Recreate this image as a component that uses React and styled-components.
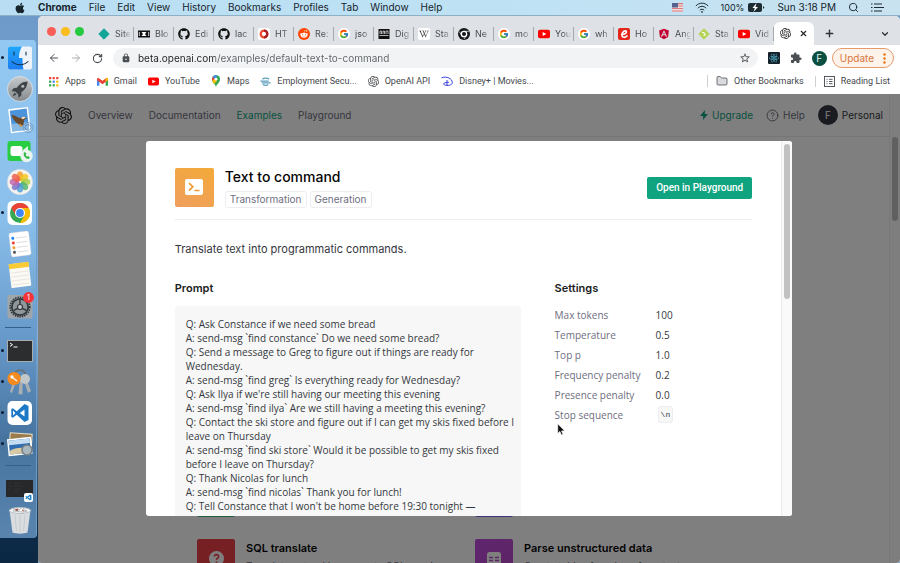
import React from "react";
import styled, { createGlobalStyle, css } from "styled-components";
import { FaApple, FaGithub, FaRedditAlien, FaAngular, FaWikipediaW, FaReact } from "react-icons/fa";
import { FcGoogle } from "react-icons/fc";
import { SiOpenai } from "react-icons/si";
import { BiLogoVisualStudio } from "react-icons/bi";
import { MdExtension, MdLock, MdStarBorder } from "react-icons/md";
import { ArrowLeft, ArrowRight, RotateCw, Plus, X, ChevronDown, Search, Folder, CircleQuestionMark } from "lucide-react";

const GlobalStyle = createGlobalStyle`
  * { box-sizing: border-box; }
  body { margin: 0; font-family: Inter, "Liberation Sans", sans-serif; overflow: hidden; }
  button, input { font: inherit; }
  button { border: 0; padding: 0; background: none; color: inherit; display: flex; align-items: center; }
  a { color: inherit; text-decoration: none; }
  h1, h2, h3, p, dl, dd, pre { margin: 0; }
  svg { display: block; flex: none; }
`;

const Desktop = styled.div`
  height: 100vh;
  display: flex;
  flex-direction: column;
  background: #6f9cc9;
`;

/* ---------- menu bar ---------- */
const MenuBar = styled.header`
  flex: none;
  height: 16px;
  display: flex;
  align-items: center;
  justify-content: space-between;
  padding: 0 16px 0 14px;
  background: linear-gradient(90deg, #b9def3, #bfe2f4 60%, #c9e2f0);
  border-bottom: 1px solid #8fb0c4;
  color: #17242c;
  font-size: 10px;
  line-height: 15px;
`;
const MenuGroup = styled.nav`
  display: flex;
  align-items: center;
  gap: ${(p) => p.$gap}px;
`;
const MenuItem = styled.button`
  font-weight: ${(p) => (p.$bold ? 700 : 400)};
  white-space: nowrap;
`;
const Charge = styled.span`
  display: flex;
  align-items: center;
  gap: 4px;
  font-size: 9px;
`;

/* ---------- dock ---------- */
const Workspace = styled.div`
  flex: 1;
  min-height: 0;
  display: flex;
`;
const DockColumn = styled.aside`
  flex: none;
  width: 38px;
  padding: 24px 1px 0 0;
  background: linear-gradient(#6d9ac9, #7fb0de 60%, #0d2c49 94%, #0b2742);
`;
const Dock = styled.div`
  padding: 2px 0 3px;
  border-radius: 0 4px 4px 0;
  border-right: 1px solid #6e9cc4;
  background: linear-gradient(#93c8f2, #8cc0ec 35%, #6395c6 62%, #47749f 80%, #5884ae);
`;
const DockItem = styled.button`
  display: grid;
  grid-template-columns: 6px 28px;
  align-items: center;
  height: 31px;
  &::before {
    content: "";
    width: 3px;
    height: 3px;
    margin-left: 1px;
    border-radius: 50%;
    background: ${(p) => (p.$running ? "#0d1b33" : "transparent")};
  }
`;
const DockRule = styled.div`
  height: 1px;
  margin: 6px 5px 7px;
  background: #35608a;
`;

/* ---------- browser ---------- */
const Browser = styled.section`
  flex: 1;
  min-width: 0;
  display: flex;
  flex-direction: column;
  background: #fff;
  border-radius: 5px 5px 4px 4px;
  overflow: hidden;
`;
const TabStrip = styled.div`
  flex: none;
  height: 29px;
  padding-top: 6px;
  display: flex;
  align-items: center;
  background: #dee1e6;
  color: #4a4e53;
`;
const Lights = styled.div`
  flex: none;
  width: 56px;
  padding: 0 0 4px 9px;
  display: flex;
  gap: 5px;
`;
const Light = styled.button`
  width: 9px;
  height: 9px;
  border-radius: 50%;
  background: ${(p) => p.$color};
`;
const Tab = styled.button`
  flex: none;
  width: 40px;
  height: 14px;
  padding: 0 0 0 4px;
  gap: 5px;
  overflow: hidden;
  font-size: 9px;
  border-right: 1px solid #a5a9ae;
  span {
    flex: 1;
    text-align: left;
    overflow: hidden;
    white-space: nowrap;
    mask-image: linear-gradient(90deg, #000 45%, transparent 90%);
  }
`;
const ActiveTab = styled.div`
  flex: none;
  width: 40px;
  height: 23px;
  align-self: flex-end;
  display: flex;
  align-items: center;
  justify-content: center;
  gap: 8px;
  background: #fff;
  border-radius: 6px 6px 0 0;
  color: #202124;
`;
const StripButton = styled.button`
  flex: none;
  padding: 0 10px;
  color: #2f3337;
  margin-left: ${(p) => (p.$end ? "auto" : 0)};
`;
const Toolbar = styled.div`
  flex: none;
  height: 24px;
  margin-top: 1px;
  display: flex;
  align-items: center;
  gap: 10px;
  padding: 0 6px 0 10px;
  color: #4b4f54;
`;
const Address = styled.label`
  flex: 1;
  height: 20px;
  display: flex;
  align-items: center;
  gap: 7px;
  padding: 0 7px 0 8px;
  background: #f1f3f4;
  border-radius: 10px;
  input {
    flex: 1;
    border: 0;
    outline: 0;
    padding: 0;
    font-size: 10px;
    line-height: 16px;
    color: transparent;
    background: linear-gradient(90deg, #202124 77px, #5f6368 77px);
    background-clip: text;
  }
`;
const Avatar = styled.span`
  flex: none;
  width: ${(p) => p.$size}px;
  height: ${(p) => p.$size}px;
  display: grid;
  place-items: center;
  border-radius: 50%;
  background: ${(p) => p.$bg};
  color: ${(p) => p.$fg};
  font-size: 10px;
`;
const UpdateButton = styled.button`
  height: 20px;
  padding: 0 7px;
  gap: 9px;
  margin-left: -5px;
  border: 1px solid #e59a6b;
  border-radius: 10px;
  background: #fef3ea;
  color: #d9753b;
  font-size: 10px;
`;
const Bookmarks = styled.nav`
  flex: none;
  height: 24px;
  display: flex;
  align-items: center;
  gap: 11px;
  padding: 0 10px 2px;
  font-family: Roboto, Inter, sans-serif;
  font-size: 9px;
  color: #44484c;
`;
const Bookmark = styled.a`
  display: flex;
  align-items: center;
  gap: 6px;
  white-space: nowrap;
  ${(p) => p.$end && css`margin-left: auto;`}
  ${(p) => p.$ruled && css`
    border-left: 1px solid #cfd1d4;
    padding-left: 8px;
  `}
`;

/* ---------- site ---------- */
const Viewport = styled.main`
  flex: 1;
  min-height: 0;
  position: relative;
  display: flex;
  overflow: hidden;
`;
const Site = styled.div`
  flex: 1;
  min-width: 0;
`;
const SiteNav = styled.nav`
  height: 43px;
  display: flex;
  align-items: center;
  justify-content: space-between;
  padding: 0 6px 0 17px;
  border-bottom: 1px solid #ececf1;
  font-size: 10px;
  color: #6e6e80;
`;
const NavGroup = styled.div`
  display: flex;
  align-items: center;
  gap: ${(p) => p.$gap}px;
`;
const NavLink = styled.a`
  display: flex;
  align-items: center;
  gap: 4px;
  color: ${(p) => p.$color || "inherit"};
`;
const Cards = styled.div`
  margin: 342px 136px 0 159px;
  display: grid;
  grid-template-columns: 1fr 1fr;
  gap: 22px 0;
`;
const Card = styled.article`
  display: grid;
  grid-template-columns: 38px 1fr;
  column-gap: 11px;
  min-height: 38px;
  h3 { font-size: 11px; line-height: 18px; font-weight: 600; color: #050505; }
  p { font-size: 10px; line-height: 14px; color: #6e6e80; margin-top: 2px; white-space: nowrap; }
`;
const Tile = styled.span`
  width: ${(p) => p.$size}px;
  height: ${(p) => p.$size}px;
  display: grid;
  place-items: center;
  border-radius: 2px;
  background: ${(p) => p.$bg};
`;
const PageScroll = styled.div`
  flex: none;
  width: 11px;
  padding: 43px 2px;
  border-left: 1px solid #f0f0f0;
  background: #fcfcfc;
`;
const Thumb = styled.div`
  width: 6px;
  height: ${(p) => p.$h}px;
  border-radius: 3px;
  background: #c1c1c1;
`;
const Overlay = styled.div`
  position: absolute;
  inset: 0;
  display: flex;
  align-items: center;
  justify-content: center;
  background: rgba(0, 0, 0, 0.5);
`;
const Modal = styled.section`
  position: relative;
  width: 75%;
  height: 80%;
  display: flex;
  overflow: hidden;
  background: #fff;
  border-radius: 3px;
`;
const ModalBody = styled.div`
  flex: 1;
  min-width: 0;
  padding: 27px 29px 0;
  overflow: hidden;
`;
const ModalScroll = styled.div`
  flex: none;
  width: 11px;
  padding: 3px 2px;
  border-left: 1px solid #ebebeb;
  background: #fafafa;
`;
const ModalHead = styled.header`
  display: flex;
  gap: 11px;
  padding-bottom: 11px;
  border-bottom: 1px solid #ececf1;
`;
const Heading = styled.div`
  flex: 1;
  h1 { font-size: 14px; line-height: 18px; font-weight: 500; color: #050505; }
`;
const Tags = styled.div`
  display: flex;
  gap: 3px;
  margin-top: 5px;
`;
const Tag = styled.span`
  padding: 0 4px;
  border: 1px solid #ececf1;
  border-radius: 3px;
  font-size: 10px;
  line-height: 15px;
  color: #6e6e80;
`;
const Primary = styled.button`
  align-self: center;
  height: 22px;
  padding: 0 9px;
  border-radius: 2px;
  background: #10a37f;
  color: #fff;
  font-family: Roboto, Inter, sans-serif;
  font-size: 10px;
  font-weight: 500;
`;
const Lead = styled.p`
  margin-top: 20px;
  font-size: 11px;
  line-height: 18px;
  color: #353740;
`;
const Columns = styled.div`
  display: grid;
  grid-template-columns: 7fr 4fr;
  column-gap: 34px;
  margin-top: 21px;
  h2 { font-size: 11px; line-height: 18px; font-weight: 600; color: #202123; }
`;
const Prompt = styled.pre`
  margin-top: 9px;
  padding: 11px 4px 11px 11px;
  border-radius: 3px;
  background: #f7f7f7;
  font-family: "Open Sans", Inter, sans-serif;
  font-size: 10px;
  line-height: 14px;
  color: #353740;
  white-space: pre-wrap;
`;
const Settings = styled.dl`
  margin-top: 8px;
  display: grid;
  grid-template-columns: 101px 1fr;
  grid-auto-rows: 20px;
  align-items: center;
  font-family: "Open Sans", Inter, sans-serif;
  font-size: 10px;
  dt { color: #6e6e80; }
  dd { color: #353740; }
`;
const Code = styled.code`
  display: inline-block;
  margin-left: 2px;
  padding: 0 2px;
  border: 1px solid #ececf1;
  border-radius: 3px;
  background: #f7f7f8;
  font-family: "Liberation Mono", monospace;
  font-size: 8px;
  line-height: 15px;
`;
const Pointer = styled.svg`
  position: absolute;
  left: 411px;
  top: 282px;
`;

/* ---------- drawings ---------- */
const YouTube = ({ w = 12 }) => (
  <svg width={w} height={w} viewBox="0 0 12 12"><rect y="1.7" width="12" height="8.6" rx="1.8" fill="#f00" /><path d="M4.7 4v4l3.6-2z" fill="#fff" /></svg>
);
const Maps = () => (
  <svg width="10" height="12" viewBox="0 0 10 12">
    <path d="M5 12C4.500 9 1 8 1 4.200A4 4 0 0 1 9 4.200C9 8 5.500 9 5 12" fill="#34a853" />
    <path d="M1.200 5.800A4 4 0 0 1 1.800 1.800L4 4z" fill="#ea4335" /><path d="M1.800 1.800A4 4 0 0 1 6.400.4L4 4z" fill="#4285f4" />
    <path d="M1.300 5.800 4 3.800 6 6 3 9z" fill="#fbbc04" /><circle cx="5" cy="4.200" r="1.400" fill="#fff" />
  </svg>
);
const Gmail = () => (
  <svg width="11" height="11" viewBox="0 0 12 12"><path d="M0 3v7.500h2.600V5z" fill="#4285f4" /><path d="M9.400 5v5.500H12V3z" fill="#34a853" /><path d="m0 3 1.200-1.200L6 5.300l4.800-3.500L12 3v1.600L6 9 0 4.600z" fill="#ea4335" /><path d="M9.400 2.800 12 2v2.600L9.400 6.500z" fill="#fbbc04" /></svg>
);
const AppsGrid = () => (
  <svg width="11" height="11" viewBox="0 0 11 11">
    {["#ea4335", "#ea4335", "#ea4335", "#34a853", "#4285f4", "#fbbc04", "#34a853", "#34a853", "#fbbc04"].map((c, i) => (
      <rect key={i} x={1 + (i % 3) * 3.6} y={1 + Math.floor(i / 3) * 3.6} width="2.2" height="2.2" fill={c} />
    ))}
  </svg>
);
const Globe = () => (
  <svg width="11" height="11" viewBox="0 0 12 12" fill="none" stroke="#5c9dbd" strokeWidth="1.3"><path d="M2.500 3.500C4.500 1.800 8 1.800 10 3.500M.5 5.500h9M2 7.500h9.500M3 9.200c2 1.200 4.500 1 6 0" /></svg>
);
const Disney = () => (
  <svg width="12" height="11" viewBox="0 0 12 11" fill="none" stroke="#3a3fe0" strokeWidth="1"><path d="M.5 1.800c5-2 10.800.7 10.800 4.700 0 3-5 3.500-8 2.300C1.500 8 3 6.200 8 6.300M6 4v5.800" /></svg>
);
const Diamond = ({ c, mark }) => (
  <svg width="12" height="12" viewBox="0 0 12 12"><path d="m6 .8 5.200 5.200L6 11.200.8 6z" fill={c} stroke={c} strokeLinejoin="round" />{mark && <path d="M4 4.500h2.200V8M6.200 5.500 8 7" stroke="#fff" fill="none" />}</svg>
);
const Ticket = () => (
  <svg width="12" height="12" viewBox="0 0 12 12"><path d="M0 2.500h12v7H0z" fill="#111" /><path d="M3.500 4h5L7 6l1.500 2h-5L5 6z" fill="#fff" /><path d="M1.300 4v4M10.700 4v4" stroke="#fff" strokeWidth=".8" /></svg>
);
const Ring = () => (
  <svg width="12" height="12" viewBox="0 0 12 12"><rect width="12" height="12" rx="2" fill="#fff" /><circle cx="6" cy="6" r="3.3" fill="none" stroke="#ef4a2f" strokeWidth="2.3" /><path d="M6 2.700a3.300 3.300 0 0 1 0 6.600" fill="none" stroke="#a91f26" strokeWidth="2.3" /></svg>
);
const Disc = ({ bg, children, square }) => (
  <svg width="12" height="12" viewBox="0 0 12 12">{square ? <rect width="12" height="12" rx="2" fill={bg} /> : <circle cx="6" cy="6" r="6" fill={bg} />}{children}</svg>
);
const Reddit = () => <Disc bg="#ff4500"><FaRedditAlien x="1.8" y="1.8" size={8.4} color="#fff" /></Disc>;
const Google = () => <Disc bg="#fff"><FcGoogle x="1" y="1" size={10} /></Disc>;
const Wiki = () => <Disc bg="#fff" square><FaWikipediaW x="1" y="1" size={10} color="#333" /></Disc>;
const Newsprint = () => (
  <svg width="12" height="12" viewBox="0 0 12 12"><path d="M.5 1h11v10H.5z" fill="#111" /><path d="M2 6V3h1.500v3M5 6V3h1.500v3M8 6V3h2v3M1.500 7.500h9" stroke="#ddd" fill="none" strokeWidth=".8" /></svg>
);
const Shutter = () => <Disc bg="#17181a"><circle cx="6" cy="6" r="2.7" fill="none" stroke="#fff" strokeWidth="1.3" /><path d="M6 3.300h5M3.700 7.400 1.400 3.600M8.300 7.400 6 11" stroke="#fff" strokeWidth=".7" /></Disc>;
const EMark = () => <Disc bg="#e4261b" square><path d="M3 6.500C6 6.700 9 5.400 8.400 3.600 7.600 1.700 4 3.500 4 7c0 3 3.500 3 5.500.6" stroke="#fff" strokeWidth="1.6" fill="none" /></Disc>;

const tabs = [
  ["Site", <Diamond c="#12a59a" />], ["Blo", <Ticket />], ["Edi", <FaGithub size={12} color="#111" />], ["lac", <FaGithub size={12} color="#111" />],
  ["HT", <Ring />], ["Re:", <Reddit />], ["jso", <Google />], ["Dig", <Newsprint />], ["Sta", <Wiki />], ["Ne", <Shutter />],
  ["mo", <Google />], ["You", <YouTube />], ["wh", <Google />], ["Ho", <EMark />], ["Ang", <FaAngular size={12} color="#c3002f" />],
  ["Sta", <Diamond c="#b4d455" mark />], ["Vid", <YouTube />],
];

const petals = ["#f59a23", "#f5c518", "#a8cf45", "#4fb46c", "#4b9fd8", "#7b70c8", "#c264a8", "#ee5a4a"];

const DockArt = ({ children }) => <svg width="28" height="28" viewBox="0 0 28 28">{children}</svg>;

const dockTop = [
  ["Finder", true, <DockArt><defs><linearGradient id="fb" x2="0" y2="1"><stop stopColor="#20a6fb" /><stop offset="1" stopColor="#1c7df0" /></linearGradient></defs><rect x="2" y="2.500" width="24" height="23" rx="2" fill="#eef3fa" /><path d="M4 2.500h12c-2.500 4-3 8-3 11.500h3.500c0 5 .3 8.500 1 11.500H4a2 2 0 0 1-2-2v-19a2 2 0 0 1 2-2" fill="url(#fb)" /><path d="M8 8v3M20 8v3M6 17.500c4 4.300 12 4.300 16 0" stroke="#16324f" strokeWidth="1.1" fill="none" strokeLinecap="round" /></DockArt>],
  ["Launchpad", false, <DockArt><defs><linearGradient id="lp" x2="0" y2="1"><stop stopColor="#c7cacc" /><stop offset="1" stopColor="#83898d" /></linearGradient></defs><circle cx="14" cy="14" r="12.500" fill="url(#lp)" stroke="#dfe4e6" strokeWidth=".8" /><path d="M21.500 6.500c-5 0-8.500 3-10.500 6.300l-3.500.4-2 3 3.600.3 3 2.800.4 3.400 2.800-2.100.2-3.500c3.500-2.200 6-6 6-10.600" fill="#3d4347" /><circle cx="16.800" cy="11.300" r="1.500" fill="#b4b9bc" /><path d="m8.500 17.500-2 4 4-2" fill="#3d4347" /></DockArt>],
  ["Mail", false, <DockArt><g transform="rotate(-7 14 14)"><rect x="3.500" y="2" width="20" height="24" fill="#fff" /><rect x="5" y="3.500" width="17" height="21" fill="#4b93da" /><path d="M5 17h17v7.500H5z" fill="#8ab9e4" /><path d="M6 8c4 0 5 3 8 4l4-1 3 2-3 1.500L17 19l-3 2-2-3c-3-2-5-6-6-10" fill="#69492c" /><path d="m15 12 3-1 2 1.500-3 1z" fill="#f1e7d0" /><path d="m12 17 4 3-2 1z" fill="#dba64a" /></g><circle cx="22" cy="21.500" r="5" fill="none" stroke="#5c87ad" strokeOpacity=".6" /><circle cx="22" cy="21.500" r="3" fill="none" stroke="#40688b" strokeOpacity=".5" /></DockArt>],
  ["FaceTime", false, <DockArt><rect x="1.500" y="4" width="23" height="20" rx="3" fill="#28cd41" /><rect x="4.500" y="9" width="12" height="10" rx="2.500" fill="#fff" /><path d="m17 13 5-4v10l-5-4z" fill="#e4f5e6" /><circle cx="20.500" cy="19" r="6.200" fill="#e9f4ee" /><path d="M18 15.500c-1.200 3 1.800 6.800 5 6.300l.8-1.400-1.800-1.300-1 .7-1.500-1.900.8-.9-1-1.800z" fill="#28b83e" /></DockArt>],
  ["Photos", false, <DockArt><circle cx="14" cy="14" r="12.700" fill="#f5f3ee" stroke="#cfd4d6" strokeWidth=".5" />{petals.map((c, i) => <ellipse key={c} cx="14" cy="8.300" rx="3.300" ry="4.700" fill={c} fillOpacity=".82" transform={`rotate(${i * 45} 14 14)`} />)}</DockArt>],
  ["Chrome", true, <DockArt><rect x="1.500" y="2" width="24.500" height="24" rx="5" fill="#fff" /><circle cx="14" cy="14" r="10" fill="#34a853" /><path d="M14 9h8.700A10 10 0 0 1 14 24l4.300-7.500z" fill="#fbbc04" /><path d="M5.300 9A10 10 0 0 1 22.700 9H14a5 5 0 0 0-4.300 7.500z" fill="#ea4335" /><circle cx="14" cy="14" r="5" fill="#fff" /><circle cx="14" cy="14" r="3.900" fill="#4285f4" /></DockArt>],
  ["Reminders", false, <DockArt><g transform="rotate(-7 14 14)"><rect x="4" y="2" width="20" height="24" rx="2" fill="#fff" stroke="#ccd" strokeWidth=".4" />{["#1d84f5", "#f23f34", "#f59a23", "#555"].map((c, i) => <g key={c}><circle cx="7.500" cy={7.5 + i * 4.7} r="1.500" fill={c} /><path d={`M10.500 ${7.5 + i * 4.7}h11`} stroke="#d5d5d5" strokeWidth=".8" /></g>)}</g></DockArt>],
  ["Notes", false, <DockArt><g transform="rotate(-7 14 14)"><rect x="4" y="2" width="20" height="24" rx="1" fill="#fbf9f3" /><rect x="4" y="2" width="20" height="5" fill="#f8cb35" /><path d="M5 11h18M5 15h18M5 19h18M5 23h18" stroke="#e3e0d8" strokeWidth=".7" /></g></DockArt>],
  ["System Preferences", false, <DockArt><rect x="1.500" y="3" width="25" height="23.500" rx="1.500" fill="#9fa6aa" /><circle cx="14" cy="15" r="9.800" fill="none" stroke="#34393d" strokeWidth="1.600" strokeDasharray="1.500 .9" /><circle cx="14" cy="15" r="8.200" fill="#8f979b" stroke="#34393d" strokeWidth="1.800" /><path d="M14 15V7.500M14 15l6.500 3.700M14 15l-6.500 3.700" stroke="#34393d" strokeWidth="1.500" /><circle cx="14" cy="15" r="2.500" fill="#c3c9cc" stroke="#34393d" strokeWidth="1.200" /><circle cx="22.500" cy="5.500" r="5.400" fill="#f4333a" /><text x="22.500" y="8.200" fontSize="7" fill="#fff" textAnchor="middle">1</text></DockArt>],
];
const dockApps = [
  ["Terminal", true, <DockArt><rect x="1.500" y="3.500" width="25" height="21" fill="#2b2d2f" stroke="#a9adb0" /><path d="m4 6 2.500 1.700L4 9.400M7.500 10h4" stroke="#fff" fill="none" /></DockArt>],
  ["Keychain Access", true, <DockArt><circle cx="14" cy="7.500" r="5.500" fill="none" stroke="#6b6f72" strokeWidth="1.500" /><path d="m11 11-5 14-2-1 4-14zM14 11l-1.500 15 4 .5V11zM17 10l5 15 3-2-5-13z" fill="#a9aeb1" /><circle cx="19" cy="11" r="5" fill="#c2c7c9" /><circle cx="8" cy="10.500" r="6.600" fill="#f58a1f" /><circle cx="6" cy="9" r="1.700" fill="#fff" /><path d="m7 10 4 3" stroke="#fff" strokeWidth="1.300" /></DockArt>],
  ["Visual Studio Code", true, <DockArt><rect x="1.500" y="2" width="24.500" height="24" rx="5" fill="#fff" /><path d="m18.500 5 4 2v14l-4 2-7.700-7.300-4 3.100-1.500-.8V10l1.500-.8 4 3.100zm0 5.400L13.800 14l4.700 3.600zM7 11.600v4.800L9.300 14z" fill="#1d78c6" fillRule="evenodd" /></DockArt>],
  ["Preview", true, <DockArt><g transform="rotate(4 14 14)"><rect x="3" y="3" width="23" height="17" fill="#e9e0ca" /><rect x="4" y="4" width="21" height="6" fill="#9b7a4b" /></g><g transform="rotate(-6 14 14)"><rect x="1.500" y="8" width="24" height="17" fill="#fff" /><rect x="3" y="9.500" width="21" height="14" fill="#2f6db0" /><path d="M3 9.500h21V14H3z" fill="#c5ddf0" /><path d="M3 20c6-3 12-3 21 0v3.500H3z" fill="#d9c9a3" /></g><circle cx="21" cy="20" r="5" fill="#a9b8bf" stroke="#777f84" strokeWidth="1.600" /></DockArt>],
];
const dockFiles = [
  ["Minimised window", false, <DockArt><path d="M0 5h27v17H0z" fill="#26282a" /><path d="M2 8h3M2 11h4M2 14h3M8 8h6M8 11h9M8 14h7M8 17h5" stroke="#34393f" strokeWidth=".7" /><rect x="18" y="18" width="9" height="9" rx="2" fill="#fff" /><BiLogoVisualStudio x="19" y="19" size={7} color="#1d80ca" /></DockArt>],
  ["Trash", false, <DockArt><path d="M3.500 4h21l-3 22.500c-4 1.500-11 1.500-15 0z" fill="#d9dddf" /><ellipse cx="14" cy="4.500" rx="10.700" ry="3" fill="#f3f4f5" stroke="#b8bec2" /><path d="m7 5 3-4 3 3 4-3 1 3 3 1-4 1z" fill="#fff" stroke="#8b9196" strokeWidth=".6" /><path d="m9 4 2-1 1 2M16 4l2 1" stroke="#b5533c" /><path d="m9 9 1.500 16M14 9v17M19 9l-1.500 16" stroke="#c1c7ca" strokeWidth=".8" /></DockArt>],
];

const renderDock = (items) => items.map(([name, running, art]) => (
  <DockItem key={name} $running={running} aria-label={name}>{art}</DockItem>
));

const settings = [["Max tokens", "100"], ["Temperature", "0.5"], ["Top p", "1.0"], ["Frequency penalty", "0.2"], ["Presence penalty", "0.0"]];

const prompt = `Q: Ask Constance if we need some bread
A: send-msg \`find constance\` Do we need some bread?
Q: Send a message to Greg to figure out if things are ready for Wednesday.
A: send-msg \`find greg\` Is everything ready for Wednesday?
Q: Ask Ilya if we're still having our meeting this evening
A: send-msg \`find ilya\` Are we still having a meeting this evening?
Q: Contact the ski store and figure out if I can get my skis fixed before I leave on Thursday
A: send-msg \`find ski store\` Would it be possible to get my skis fixed before I leave on Thursday?
Q: Thank Nicolas for lunch
A: send-msg \`find nicolas\` Thank you for lunch!
Q: Tell Constance that I won't be home before 19:30 tonight —`;

export default function App() {
  return (
    <Desktop>
      <GlobalStyle />
      <MenuBar>
        <MenuGroup $gap={12}>
          <MenuItem aria-label="Apple"><FaApple size={12} /></MenuItem>
          <MenuItem $bold>Chrome</MenuItem>
          {["File", "Edit", "View", "History", "Bookmarks", "Profiles", "Tab", "Window", "Help"].map((t) => <MenuItem key={t}>{t}</MenuItem>)}
        </MenuGroup>
        <MenuGroup $gap={12}>
          <svg width="11" height="9" viewBox="0 0 11 9"><path d="M0 0h11v9H0z" fill="#f3dcdc" /><path d="M0 .7h11M0 3h11M0 5.500h11M0 8h11" stroke="#d77a80" strokeWidth="1.200" /><path d="M0 0h6v4.500H0z" fill="#56638f" /></svg>
          <svg width="14" height="11" viewBox="0 0 14 11" fill="none" stroke="#1d2b33" strokeWidth="1"><path d="M.8 4c3.500-3.800 8.900-3.800 12.400 0M2.800 6.200c2.500-2.500 5.900-2.500 8.400 0M4.800 8.200c1.300-1.300 3.100-1.300 4.400 0" /><circle cx="7" cy="10" r=".5" /></svg>
          <Charge>100%<svg width="17" height="9" viewBox="0 0 17 9"><rect width="14" height="9" rx="2" fill="#1d2b33" /><path d="M15 3v3l1.500-1.500z" fill="#1d2b33" /><path d="M8.500 0 4.500 5h2.300L5.500 9l4.500-5H7.500z" fill="#fff" /></svg></Charge>
          <MenuItem>Sun 3:18 PM</MenuItem>
          <MenuItem aria-label="Search"><Search size={11} /></MenuItem>
          <MenuItem aria-label="Notifications"><svg width="13" height="9" viewBox="0 0 13 9" stroke="#1d2b33" strokeWidth="1.200"><path d="M0 1h1.500M3 1h8M0 4.500h1.500M3 4.500h10M0 8h1.500M3 8h8" /></svg></MenuItem>
        </MenuGroup>
      </MenuBar>
      <Workspace>
        <DockColumn>
          <Dock>
            {renderDock(dockTop)}
            <DockRule />
            {renderDock(dockApps)}
            <DockRule />
            {renderDock(dockFiles)}
          </Dock>
        </DockColumn>
        <Browser>
          <TabStrip>
            <Lights>
              <Light $color="#f95e57" aria-label="Close" /><Light $color="#fbbc1f" aria-label="Minimise" /><Light $color="#25c940" aria-label="Zoom" />
            </Lights>
            {tabs.map(([label, icon], i) => <Tab key={i}>{icon}<span>{label}</span></Tab>)}
            <ActiveTab><SiOpenai size={11} /><button aria-label="Close tab"><X size={9} strokeWidth={3} /></button></ActiveTab>
            <StripButton aria-label="New tab"><Plus size={11} strokeWidth={3} /></StripButton>
            <StripButton $end aria-label="Search tabs"><ChevronDown size={10} strokeWidth={3} /></StripButton>
          </TabStrip>
          <Toolbar>
            <button aria-label="Back"><ArrowLeft size={12} /></button>
            <button aria-label="Forward"><ArrowRight size={12} color="#a9acb0" /></button>
            <button aria-label="Reload"><RotateCw size={11} strokeWidth={2.5} /></button>
            <Address>
              <MdLock size={10} />
              <input aria-label="Address" defaultValue="beta.openai.com/examples/default-text-to-command" />
              <MdStarBorder size={12} />
            </Address>
            <svg width="12" height="12" viewBox="0 0 12 12"><rect width="12" height="12" rx="1" fill="#16222b" /><FaReact x="1" y="1" size={10} color="#54bcd8" /></svg>
            <MdExtension size={12} />
            <Avatar $size={15} $bg="#0b4f41" $fg="#e6f4ef">F</Avatar>
            <UpdateButton>Update<svg width="3" height="11" viewBox="0 0 3 11" fill="#e8710a"><circle cx="1.500" cy="1.500" r="1.200" /><circle cx="1.500" cy="5.500" r="1.200" /><circle cx="1.500" cy="9.500" r="1.200" /></svg></UpdateButton>
          </Toolbar>
          <Bookmarks>
            <Bookmark href="#apps"><AppsGrid />Apps</Bookmark>
            <Bookmark href="#gmail"><Gmail />Gmail</Bookmark>
            <Bookmark href="#youtube"><YouTube w={11} />YouTube</Bookmark>
            <Bookmark href="#maps"><Maps />Maps</Bookmark>
            <Bookmark href="#employment"><Globe />Employment Secu...</Bookmark>
            <Bookmark href="#openai"><SiOpenai size={11} />OpenAI API</Bookmark>
            <Bookmark href="#disney"><Disney />Disney+ | Movies...</Bookmark>
            <Bookmark href="#other" $end $ruled><Folder size={12} strokeWidth={1.5} fill="#d8dadd" />Other Bookmarks</Bookmark>
            <Bookmark href="#reading" $ruled><svg width="11" height="11" viewBox="0 0 11 11" fill="none" stroke="#55595e"><rect x=".5" y=".5" width="10" height="10" /><path d="M2.500 3.300h1M2.500 5.500h1M2.500 7.700h1M5 3.300h3.500M5 5.500h3.500M5 7.700h3.500" /></svg>Reading List</Bookmark>
          </Bookmarks>
          <Viewport>
            <Site>
              <SiteNav>
                <NavGroup $gap={16}>
                  <SiOpenai size={17} color="#202123" />
                  <NavLink href="#overview">Overview</NavLink>
                  <NavLink href="#docs">Documentation</NavLink>
                  <NavLink href="#examples" $color="#10a37f">Examples</NavLink>
                  <NavLink href="#playground">Playground</NavLink>
                </NavGroup>
                <NavGroup $gap={13}>
                  <NavLink href="#upgrade" $color="#10a37f"><svg width="8" height="10" viewBox="0 0 8 10"><path d="M5 0 0 6h3.200L3 10l5-6H4.800z" fill="#10a37f" /></svg>Upgrade</NavLink>
                  <NavLink href="#help"><CircleQuestionMark size={13} strokeWidth={1.8} />Help</NavLink>
                  <NavLink href="#account" $color="#353740"><Avatar $size={20} $bg="#353740" $fg="#fff">F</Avatar>Personal</NavLink>
                </NavGroup>
              </SiteNav>
              <Cards>
                <Card><Tile $size={38} $bg="#3fbf7f" /></Card>
                <Card><Tile $size={38} $bg="#7a6ff0" /></Card>
                <Card>
                  <Tile $size={38} $bg="#ef4146"><svg width="15" height="15" viewBox="0 0 15 15"><circle cx="7.500" cy="7.500" r="7.500" fill="#fff" /><path d="M5.300 5.500c.3-2.700 4.600-2.400 4.300.2-.2 1.500-2 1.500-2.100 3.200M7.500 10.200v1.600" stroke="#ef4146" strokeWidth="1.600" fill="none" /></svg></Tile>
                  <div><h3>SQL translate</h3><p>Translate natural language to SQL queries.</p></div>
                </Card>
                <Card>
                  <Tile $size={38} $bg="linear-gradient(135deg, #c04be0, #b84bc4)"><svg width="14" height="13" viewBox="0 0 14 13"><rect width="14" height="13" rx="2.500" fill="#fff" /><path d="M2 5.500h4M8 5.500h4M2 8.500h4M8 8.500h4" stroke="#b84bd0" strokeWidth="1.400" /></svg></Tile>
                  <div><h3>Parse unstructured data</h3><p>Create tables from long form text</p></div>
                </Card>
              </Cards>
            </Site>
            <PageScroll><Thumb $h={84} /></PageScroll>
            <Overlay>
              <Modal role="dialog" aria-label="Text to command">
                <ModalBody>
                  <ModalHead>
                    <Tile $size={39} $bg="linear-gradient(25deg, #ef9f5f, #f4a938)"><svg width="18" height="16" viewBox="0 0 18 16"><rect width="18" height="16" rx="2" fill="#fff" /><path d="m4 4 3.800 3.800L4 11.600M9.500 11.500h5" stroke="#f0992f" strokeWidth="1.700" fill="none" /></svg></Tile>
                    <Heading>
                      <h1>Text to command</h1>
                      <Tags><Tag>Transformation</Tag><Tag>Generation</Tag></Tags>
                    </Heading>
                    <Primary>Open in Playground</Primary>
                  </ModalHead>
                  <Lead>Translate text into programmatic commands.</Lead>
                  <Columns>
                    <div>
                      <h2>Prompt</h2>
                      <Prompt>{prompt}</Prompt>
                    </div>
                    <div>
                      <h2>Settings</h2>
                      <Settings>
                        {settings.map(([k, v]) => <React.Fragment key={k}><dt>{k}</dt><dd>{v}</dd></React.Fragment>)}
                        <dt>Stop sequence</dt><dd><Code>\n</Code></dd>
                      </Settings>
                    </div>
                  </Columns>
                </ModalBody>
                <ModalScroll><Thumb $h={155} /></ModalScroll>
                <Pointer width="9" height="13" viewBox="0 0 9 13"><path d="M.7.800v9.700l2.200-2 1.500 3.600 1.700-.7-1.500-3.500h3.200z" fill="#111" stroke="#fff" strokeWidth=".7" /></Pointer>
              </Modal>
            </Overlay>
          </Viewport>
        </Browser>
      </Workspace>
    </Desktop>
  );
}
